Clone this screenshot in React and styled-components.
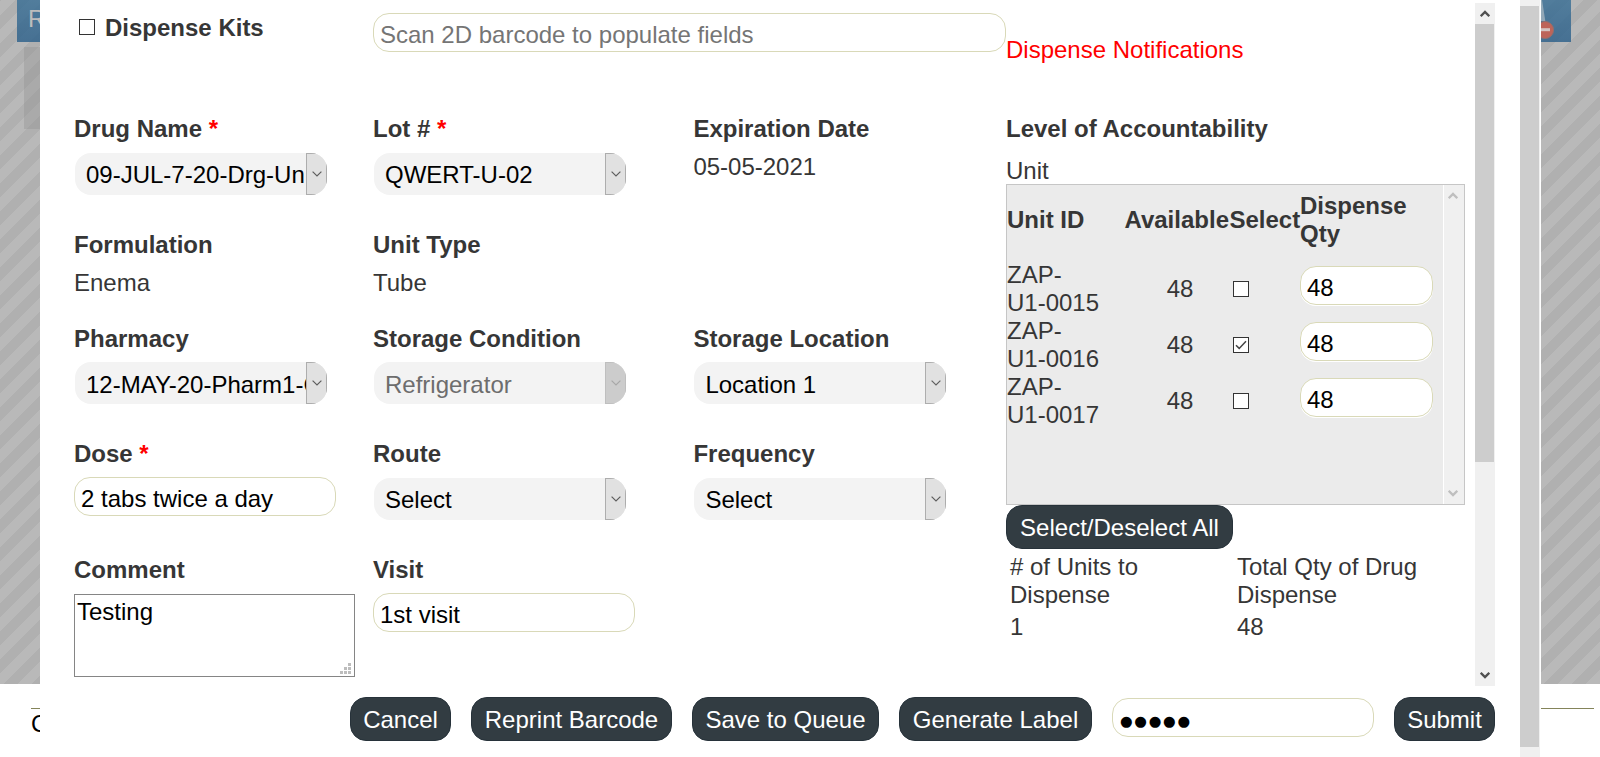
import React from "react";
import styled, { createGlobalStyle } from "styled-components";

const GlobalStyle = createGlobalStyle`
  * { box-sizing: border-box; }
  html, body { margin: 0; height: 757px; overflow: hidden; background: #fff; }
  body, input, textarea, button {
    font-family: "Liberation Sans", Arial, sans-serif;
    font-size: 24px;
    line-height: 28px;
  }
  body { color: #363636; }
`;

const Page = styled.div`
  position: relative;
  width: 1600px;
  height: 757px;
  overflow: hidden;
`;

const Backdrop = styled.div`
  height: 684px;
  padding: 0 29px 0 17px;
  background: repeating-linear-gradient(
    -45deg,
    #b9b9b9 0 9.9px,
    #b0b0b0 9.9px 19.8px
  );
`;

const PageHeader = styled.header`
  display: flex;
  justify-content: space-between;
  height: 42px;
  padding: 5px 3px 0 11px;
  background: linear-gradient(rgba(52, 108, 148, 0.78), rgba(38, 92, 136, 0.78));
  color: #bdbdbd;
`;

const StatusIcon = styled.svg`
  width: 40px;
  height: 42px;
  margin-top: -5px;
`;

const PagePanel = styled.div`
  width: 600px;
  height: 82px;
  margin: 5px 0 0 7px;
  background: rgba(140, 140, 140, 0.32);
`;

const PageFooter = styled.footer`
  margin: 24px 6px 0 31px;
  border-top: 1px solid #84845a;
  padding-top: 1px;
  color: #000;
`;

const Dialog = styled.section`
  position: absolute;
  top: 0;
  left: 40px;
  display: flex;
  width: 1501px;
  height: 757px;
  background: #fff;
`;

const DialogMain = styled.div`
  display: flex;
  flex-direction: column;
  width: 1480px;
  padding: 3px 25px 0 34px;
`;

const Scroller = styled.div`
  display: flex;
  height: 683px;
`;

const FormGrid = styled.div`
  display: grid;
  grid-template-columns: 299px 320.4px 312.6px;
  grid-template-rows: 112px 116px 94px 115px 116px 130px;
`;

const KitsCell = styled.label`
  display: flex;
  align-items: flex-start;
  gap: 10px;
  padding: 11px 0 0 5px;
  font-weight: bold;
`;

const ScanCell = styled.div`
  grid-column: span 2;
  padding-top: 10px;
`;

const Box = styled.span`
  display: flex;
  align-items: center;
  justify-content: center;
  width: 16px;
  height: 16px;
  margin-top: ${(p) => p.$top || 0}px;
  border: 1px solid #333;
  background: #fff;
`;

const Input = styled.input`
  display: block;
  width: ${(p) => p.$width}px;
  height: 39px;
  margin: 0;
  padding: 4px 6px 0;
  border: 1px solid #d9d9b8;
  border-radius: 16px;
  background: #fff;
  box-shadow: 0 1px 0 #fff;
  color: #000;
  outline: none;
  &::placeholder { color: #757575; opacity: 1; }
`;

const FieldCell = styled.div`
  grid-column: ${(p) => p.$col};
`;

const Label = styled.div`
  height: 28px;
  font-weight: bold;
  white-space: nowrap;
`;

const Required = styled.span`
  color: #f00;
`;

const Control = styled.div`
  margin-top: ${(p) => p.$gap}px;
`;

const SelectBox = styled.div`
  display: flex;
  width: 252px;
  height: 42px;
  margin-left: 1px;
  border-radius: 16px;
  overflow: hidden;
  background: #f3f3f3;
  color: ${(p) => (p.$disabled ? "#6d6d6d" : "#000")};
`;

const SelectText = styled.span`
  width: 231px;
  padding: ${(p) => (p.$low ? 9 : 8)}px 0 0 11px;
  overflow: hidden;
  white-space: nowrap;
`;

const SelectArrow = styled.span`
  display: flex;
  align-items: center;
  justify-content: center;
  width: 21px;
  border: 1px solid ${(p) => (p.$disabled ? "#bfbfbf" : "#adadad")};
  background: ${(p) => (p.$disabled ? "#ccc" : "#e1e1e1")};
  color: ${(p) => (p.$disabled ? "#a8a8a8" : "#606060")};
`;

const CommentBox = styled.div`
  display: flex;
  justify-content: space-between;
  align-items: flex-end;
  width: 281px;
  height: 83px;
  padding: 3px 3px 2px 2px;
  border: 1px solid #858585;
  color: #000;
`;

const CommentText = styled.span`
  align-self: flex-start;
`;

const SidePanel = styled.div`
  width: 459px;
`;

const Notice = styled.div`
  height: 79px;
  margin-top: 33px;
  color: #f00;
`;

const UnitLevel = styled.div`
  height: 27px;
  margin-top: 14px;
`;

const UnitBox = styled.div`
  display: flex;
  justify-content: space-between;
  height: 321px;
  border: 1px solid #c6c6c6;
  background: #ebebeb;
`;

const UnitTable = styled.div`
  padding-top: 7px;
`;

const UnitRow = styled.div`
  display: grid;
  grid-template-columns: 117.5px 105px 70.5px 133px;
  align-items: center;
  height: 56px;
  margin-bottom: ${(p) => (p.$head ? 13 : 0)}px;
  font-weight: ${(p) => (p.$head ? "bold" : "normal")};
`;

const UnitId = styled.span`
  display: flex;
  flex-direction: column;
`;

const Available = styled.span`
  padding-left: 6px;
  text-align: center;
`;

const CheckCell = styled.span`
  padding-left: 4px;
`;

const QtyCell = styled.span`
  padding-bottom: 7px;
`;

const SelectAll = styled.div`
  display: flex;
`;

const Button = styled.button`
  height: 44px;
  padding: 2px 0 0;
  width: ${(p) => p.$width}px;
  border: 1px solid #27323a;
  border-radius: 16px;
  background: #323c42;
  color: #fff;
  white-space: nowrap;
`;

const Totals = styled.div`
  display: grid;
  grid-template-columns: 227px 200px;
  row-gap: 4px;
  padding: 4px 0 0 4px;
`;

const TotalLabel = styled.span`
  width: ${(p) => p.$width}px;
`;

const ScrollTrack = styled.div`
  display: flex;
  flex-direction: column;
  align-items: center;
  justify-content: space-between;
  width: 20px;
  height: 683px;
  margin-left: 10px;
  padding: 7px 0;
  background: #f0f0f0;
  color: #505050;
`;

const ScrollGroup = styled.div`
  display: flex;
  flex-direction: column;
  align-items: center;
`;

const ScrollThumb = styled.div`
  width: 19px;
  height: ${(p) => p.$height}px;
  margin: ${(p) => p.$top}px 1px 0 0;
  background: #cdcdcd;
`;

const UnitScroll = styled.div`
  display: flex;
  flex-direction: column;
  align-items: center;
  justify-content: space-between;
  width: 21px;
  padding: 7px 1px 7px 0;
  border-left: 1px solid #fff;
  background: #f0f0f0;
  color: #bfbfbf;
`;

const DialogScroll = styled.div`
  width: 20px;
  height: 757px;
  background: #f0f0f0;
  display: flow-root;
`;

const Actions = styled.div`
  display: flex;
  justify-content: flex-end;
  gap: 20px;
  margin-top: 11px;
`;

const Signature = styled.div`
  width: 262px;
  height: 39px;
  margin-top: 1px;
  padding: 8px 0 0 7px;
  border: 1px solid #d9d9b8;
  border-radius: 16px;
  color: #000;
  font-family: "DejaVu Sans", sans-serif;
  font-size: 14.5px;
  letter-spacing: 1.7px;
`;

const Chevron = ({ up = false, thin = false }) => (
  <svg width="10" height={thin ? 6 : 8} viewBox={thin ? "0 0 10 6" : "0 0 10 8"} fill="none" stroke="currentColor" strokeWidth={thin ? 1.2 : 2.4}>
    <path d={thin ? "M.6 .6L5 5L9.4 .6" : up ? "M.7 6.2L5 2L9.3 6.2" : "M.7 1.8L5 6L9.3 1.8"} />
  </svg>
);

const Check = () => (
  <svg width="12" height="12" viewBox="0 0 12 12" fill="none" stroke="#444" strokeWidth="1.5">
    <path d="M1 6.2L4.2 9.4L11 2.2" />
  </svg>
);

const Grip = () => (
  <svg width="11" height="11" viewBox="0 0 11 11" fill="#bdbdbd">
    <path d="M0 8h3v3H0zM4 8h3v3H4zM8 8h3v3H8zM4 4h3v3H4zM8 4h3v3H8zM8 0h3v3H8z" />
  </svg>
);

const Field = ({ label, required, col, gap = 10, children }) => (
  <FieldCell $col={col}>
    <Label>
      {label} {required && <Required>*</Required>}
    </Label>
    <Control $gap={gap}>{children}</Control>
  </FieldCell>
);

const Select = ({ value, disabled, low }) => (
  <SelectBox $disabled={disabled}>
    <SelectText $low={low}>{value}</SelectText>
    <SelectArrow $disabled={disabled}>
      <Chevron thin />
    </SelectArrow>
  </SelectBox>
);

const units = [
  { id: ["ZAP-", "U1-0015"], available: 48, checked: false, qty: "48" },
  { id: ["ZAP-", "U1-0016"], available: 48, checked: true, qty: "48" },
  { id: ["ZAP-", "U1-0017"], available: 48, checked: false, qty: "48" },
];

export default function App() {
  return (
    <Page>
      <GlobalStyle />
      <Backdrop>
        <PageHeader>
          <span>R</span>
          <StatusIcon viewBox="0 0 40 42">
            <path d="M8 0H14L17.3 21H8z" fill="#a9b8c2" opacity=".75" />
            <circle cx="17" cy="30" r="8.6" fill="#bd6459" stroke="#8d6f70" />
            <path d="M12 28.2h10v3H12z" fill="#d3c4c2" />
          </StatusIcon>
        </PageHeader>
        <PagePanel />
      </Backdrop>
      <PageFooter>C</PageFooter>

      <Dialog>
        <DialogMain>
          <Scroller>
            <FormGrid>
              <KitsCell>
                <Box $top={5} />
                Dispense Kits
              </KitsCell>
              <ScanCell>
                <Input $width={633} placeholder="Scan 2D barcode to populate fields" />
              </ScanCell>

              <Field label="Drug Name" required col={1}><Select value="09-JUL-7-20-Drg-Un" /></Field>
              <Field label="Lot #" required col={2}><Select value="QWERT-U-02" /></Field>
              <Field label="Expiration Date" col={3}>05-05-2021</Field>

              <Field label="Formulation" col={1}>Enema</Field>
              <Field label="Unit Type" col={2}>Tube</Field>

              <Field label="Pharmacy" col={1} gap={9}><Select low value="12-MAY-20-Pharm1-C" /></Field>
              <Field label="Storage Condition" col={2} gap={9}><Select low value="Refrigerator" disabled /></Field>
              <Field label="Storage Location" col={3} gap={9}><Select low value="Location 1" /></Field>

              <Field label="Dose" required col={1} gap={9}><Input $width={262} defaultValue="2 tabs twice a day" /></Field>
              <Field label="Route" col={2}><Select value="Select" /></Field>
              <Field label="Frequency" col={3}><Select value="Select" /></Field>

              <Field label="Comment" col={1}>
                <CommentBox>
                  <CommentText>Testing</CommentText>
                  <Grip />
                </CommentBox>
              </Field>
              <Field label="Visit" col={2} gap={9}><Input $width={262} defaultValue="1st visit" /></Field>
            </FormGrid>

            <SidePanel>
              <Notice>Dispense Notifications</Notice>
              <Label>Level of Accountability</Label>
              <UnitLevel>Unit</UnitLevel>
              <UnitBox>
                <UnitTable>
                  <UnitRow $head>
                    <span>Unit ID</span>
                    <span>Available</span>
                    <span>Select</span>
                    <span>Dispense Qty</span>
                  </UnitRow>
                  {units.map((u) => (
                    <UnitRow key={u.id[1]}>
                      <UnitId>
                        <span>{u.id[0]}</span>
                        <span>{u.id[1]}</span>
                      </UnitId>
                      <Available>{u.available}</Available>
                      <CheckCell>
                        <Box>{u.checked && <Check />}</Box>
                      </CheckCell>
                      <QtyCell>
                        <Input $width={133} defaultValue={u.qty} />
                      </QtyCell>
                    </UnitRow>
                  ))}
                </UnitTable>
                <UnitScroll>
                  <Chevron up />
                  <Chevron />
                </UnitScroll>
              </UnitBox>
              <SelectAll>
                <Button $width={227}>Select/Deselect All</Button>
              </SelectAll>
              <Totals>
                <TotalLabel $width={160}># of Units to Dispense</TotalLabel>
                <TotalLabel $width={200}>Total Qty of Drug Dispense</TotalLabel>
                <span>1</span>
                <span>48</span>
              </Totals>
            </SidePanel>

            <ScrollTrack>
              <ScrollGroup>
                <Chevron up />
                <ScrollThumb $height={438} $top={6} />
              </ScrollGroup>
              <Chevron />
            </ScrollTrack>
          </Scroller>

          <Actions>
            <Button $width={101}>Cancel</Button>
            <Button $width={201}>Reprint Barcode</Button>
            <Button $width={187}>Save to Queue</Button>
            <Button $width={193}>Generate Label</Button>
            <Signature>●●●●●</Signature>
            <Button $width={101}>Submit</Button>
          </Actions>
        </DialogMain>
        <DialogScroll>
          <ScrollThumb $height={741} $top={6} />
        </DialogScroll>
      </Dialog>
    </Page>
  );
}
